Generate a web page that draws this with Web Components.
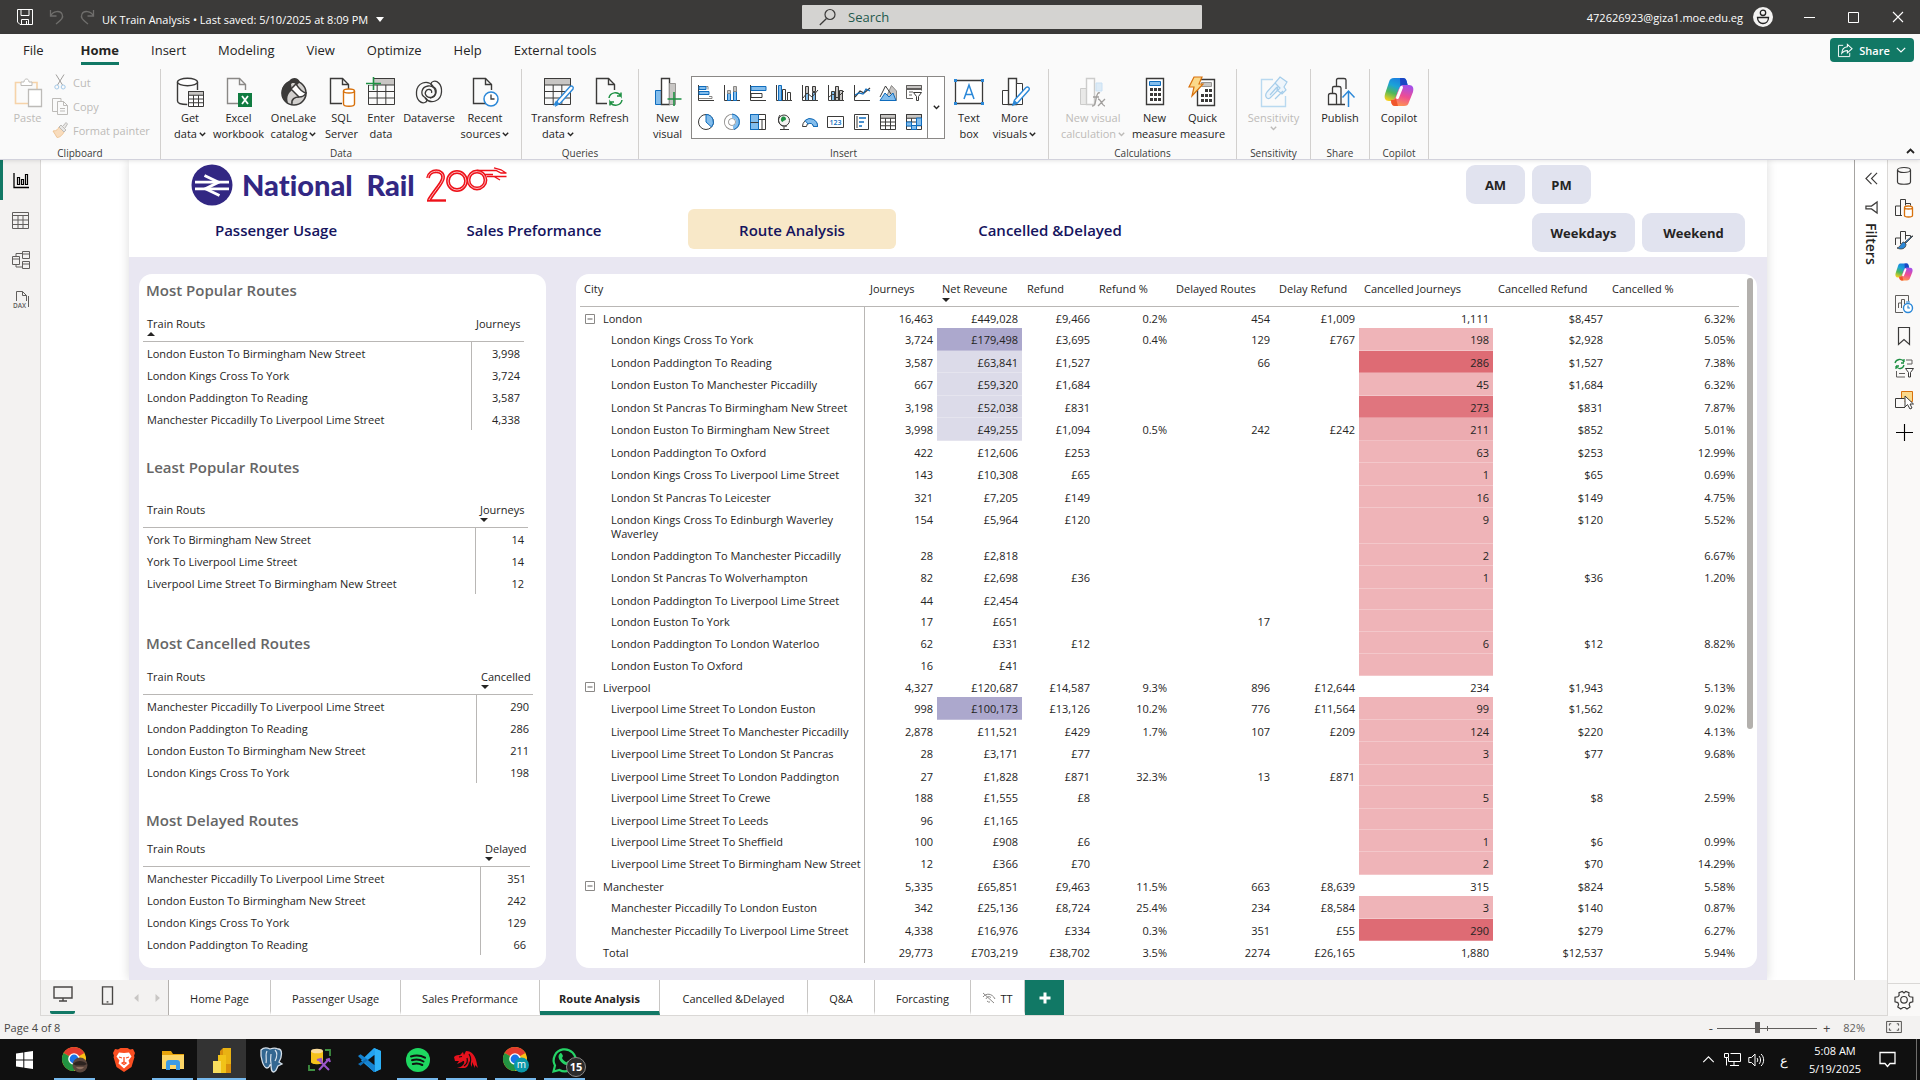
<!DOCTYPE html>
<html lang="en">
<head>
<meta charset="utf-8">
<title>UK Train Analysis</title>
<style>
html,body{margin:0;height:100%}
body{font-family:"Open Sans","Noto Sans",sans-serif;font-size:11px;color:#252423;overflow:hidden;background:#fff}
</style>
</head>
<body>
<desktop-screen></desktop-screen>
<script>
const G='#3b3a39', B='#0f6cbd', LB='#83bdec', GN='#1e9043';
const copilot=(id)=>`<defs><linearGradient id="${id}a" x1="0.6" y1="0" x2="0.2" y2="1"><stop offset="0" stop-color="#1b7de0"/><stop offset=".35" stop-color="#1ba3d8"/><stop offset=".65" stop-color="#4fb85a"/><stop offset="1" stop-color="#f8cf1c"/></linearGradient><linearGradient id="${id}b" x1=".6" y1="0" x2=".3" y2="1"><stop offset="0" stop-color="#a64fe8"/><stop offset=".5" stop-color="#ee4d93"/><stop offset="1" stop-color="#ff9a4d"/></linearGradient></defs>
<path d="M10 1h9c2 0 3 1 3.600 3l1 4h-4c-3 0-4 2-5 5l-3 8c-1 2-2 3-4 3H5c-4 0-5-3-4-7L5 5c1-3 2-4 5-4z" fill="url(#${id}a)"/><path d="M16 1h3c2 0 3 1 3.600 3l1 4h-4c-1.500 0-2.500.5-3.300 1.500z" fill="#1b46c4"/>
<path d="M20 29h-9c-2 0-3-1-3.600-3l-.8-3c3 0 4-1 5-3l3.500-9c1-2 2.500-3 4.500-3H25c4 0 5 3 4 7l-4 10c-1 3-2 4-5 4z" fill="url(#${id}b)"/><path d="M7 23h2c1.500 0 2.300-.6 3-1.500L14 29h-3c-2 0-3-1-3.600-3z" fill="#f0562c"/><path d="M17.500 10.500 13.500 20.500" stroke="#fff" stroke-width="3" stroke-linecap="round"/>`;
const axes=`<path d="M1.500 1v15.500H17" fill="none" stroke="${G}"/>`;
const doc=(c=G)=>`<path d="M17 26.500H2.500v-25h12l6 6V13" fill="none" stroke="${c}" stroke-width="1.400"/><path d="M14.500 1.500v6h6" fill="none" stroke="${c}" stroke-width="1.400"/>`;
const grid=(x,y,w,h,c=G)=>`<g fill="none" stroke="${c}"><path fill="#c8c6c4" d="M${x} ${y}h${w}v${h/4}h-${w}z"/><path d="M${x} ${y}h${w}v${h}h-${w}zM${x} ${y+h/2}h${w}M${x} ${y+h*3/4}h${w}M${x+w/3} ${y+h/4}v${h*3/4}M${x+w*2/3} ${y+h/4}v${h*3/4}"/></g>`;
const cols=(o)=>`<path d="M2.500 13.500h6v14h-6z" fill="${o?'#83bdec':'#fff'}" stroke="${o?B:G}"/><path d="M8.500 1.500h8v26h-8z" fill="#fff" stroke="${G}" stroke-width="1.400"/><path d="M16.500 6.500h6v21h-6z" fill="${o?'#c8c6c4':'#fff'}" stroke="${o?'#979593':G}"/>`;
const chrome=`<circle cx="12" cy="12" r="12" fill="#fbc116"/><path d="M12 12 1.600 6A12 12 0 0 1 22.400 6z" fill="#e33b2e"/><path d="M12 12 1.600 6A12 12 0 0 0 12 24l5-9z" fill="#229342"/><circle cx="12" cy="12" r="5.800" fill="#fff"/><circle cx="12" cy="12" r="4.400" fill="#1a73e8"/>`;
const pencil=`<path d="M13 28l1.500-5L26 10.500c2-1.500 4 .5 3 2.500L17.500 26z" fill="#fff" stroke="#2b88d8" stroke-width="1.400"/><path d="M13 28l1.500-5 3 3z" fill="#2b88d8"/>`;
const ICONS={
 save:[16,16,`<path d="M.5.5h15v15H3l-2.500-2.500z M4 .5v6h8v-6 M4.500 15.500v-5h7v5 M9.500 12v3" fill="none" stroke="#fff"/>`],
 undo:[15,16,`<path d="M1.500 1v6h6M1.500 7C4 2 11 1 13 5s-1 6-6 10" fill="none" stroke="#6f6e6c" stroke-width="1.300"/>`],
 redo:[15,16,`<path d="M13.500 1v6h-6M13.500 7C11 2 4 1 2 5s1 6 6 10" fill="none" stroke="#6f6e6c" stroke-width="1.300"/>`],
 down:[10,6,`<path d="M0 0h10L5 6z" fill="#fff"/>`],
 search:[18,18,`<circle cx="11" cy="6.500" r="5" fill="none" stroke="#3b3a39" stroke-width="1.200"/><path d="M7.500 10.500.8 17" stroke="#3b3a39" stroke-width="1.300"/>`],
 avatar:[20,20,`<circle cx="10" cy="10" r="10" fill="#f3f2f1"/><circle cx="10" cy="5.800" r="2.700" fill="none" stroke="#222" stroke-width="1.300"/><path d="M4.500 10.500h11c0 8-11 8-11 0z" fill="none" stroke="#222" stroke-width="1.300"/>`],
 min:[12,12,`<path d="M0 6.500h11" stroke="#fff"/>`],
 max:[12,12,`<path d="M.5 1.500h10v10H.5z" fill="none" stroke="#fff"/>`],
 close:[12,12,`<path d="M1 1l10 10M11 1 1 11" stroke="#fff" stroke-width="1.100"/>`],
 share:[16,16,`<path d="M5.500 2.500h-5v12h12v-4" fill="none" stroke="#fff"/><path d="M10 1.500 15 6l-5 4.500V8C7 8 5.500 9 4 11c.2-4 2-6.500 6-7z" fill="none" stroke="#fff" stroke-width="1.100"/>`],
 chevw:[10,6,`<path d="M.8.8 5 5 9.200.8" fill="none" stroke="#fff" stroke-width="1.200"/>`],
 chev:[7,5,`<path d="M.8.8 3.500 3.500 6.200.8" fill="none" stroke="currentColor" stroke-width="1.400"/>`],
 up:[9,6,`<path d="M1 5l3.500-3.500L8 5" fill="none" stroke="#252423" stroke-width="1.800"/>`],
 paste:[28,30,`<path d="M14 26.500H1.500v-21h6M17 5.500h6V12" fill="none" stroke="#f6d3a9" stroke-width="1.600"/><path d="M7 8.500h11V5h-3c0-4-5-4-5 0H7z" fill="#fff" stroke="#bdbbb8"/><path d="M14.500 12.500h13v17h-13z" fill="#fff" stroke="#bdbbb8" stroke-width="1.300"/>`],
 cut:[12,16,`<path d="M2 .5 8.500 11M10 .5 3.500 11" fill="none" stroke="#a19f9d"/><circle cx="2.800" cy="13" r="2" fill="none" stroke="#a4c9e8"/><circle cx="9.200" cy="13" r="2" fill="none" stroke="#a4c9e8"/>`],
 copy:[16,17,`<path d="M9 3.500v-3H.5v13H5M5.500 3.500h6l4 4v9h-10z M11.500 3.500v4h4M8 10.500h5M8 13h5" fill="none" stroke="#bdbbb8"/>`],
 painter:[16,16,`<path d="M1 9c4 0 5-2 6-4l5 5c-2 4-5 5.500-7 5.500C4 13 2 11 1 9z" fill="#f8dcbd" stroke="#efc596"/><path d="M7 5l2-2 5 5-2 2zM11 4l3-3.500 1.500 1.500L13 6" fill="#e8e6e4" stroke="#bdbbb8"/>`],
 getdata:[28,30,`<path d="M1.500 5v19c0 2 4 3.500 10 3.500M21.500 5v8" fill="none" stroke="${G}" stroke-width="1.400"/><ellipse cx="11.500" cy="5" rx="10" ry="3.700" fill="#fff" stroke="${G}" stroke-width="1.400"/><path d="M11.500 14h17v16h-17z" fill="#fff"/>${grid(12.5,14.5,15,15)}`],
 excel:[28,30,`${doc('#8a8886')}<path d="M13 16h14v14H13z" fill="#107c41"/><path d="M17 19l6 8M23 19l-6 8" stroke="#fff" stroke-width="1.800"/>`],
 onelake:[28,30,`<circle cx="14" cy="16" r="12" fill="#d2d0ce" stroke="${G}" stroke-width="1.600"/><path d="M9 4C12 0 18 0 20 5l-3 3c-3-3-5-2-6-1l1 6c-3 3-6 6-4 13C0 22-1 9 9 4z" fill="${G}"/><path d="M11 12l8 8c4 0 6-2 7-4-5-1-8-6-10-9z" fill="#fff" stroke="${G}" stroke-width="1.500"/><path d="M12 27c-1-5 3-7 7-7" fill="none" stroke="${G}" stroke-width="1.500"/>`],
 sql:[28,30,`${doc()}<path d="M14 12h14v18H14z" fill="#fafafa"/><path d="M15.500 14v13c0 3 11 3 11 0V14" fill="#fff" stroke="#d8710c" stroke-width="1.400"/><ellipse cx="21" cy="14" rx="5.500" ry="2" fill="#fff" stroke="#d8710c" stroke-width="1.400"/>`],
 enter:[30,30,`${grid(2.500,1.500,26,26)}<path d="M0 0h8v8H0z" fill="#fafafa"/><path d="M7.500 0v13M0 6.500h15" stroke="${GN}" stroke-width="1.600"/>`],
 dataverse:[28,28,`<g fill="none" stroke="${G}" stroke-width="1.300"><path d="M18 8C12 1 2 5 1.500 14 1 22 6 26 10 24.500c3-1 2-4 0-5C5 17 6 9 13 8c5-.6 8 3 7.500 7-.4 4-6 6-9 3-3-3 0-7 3-6.500 2 .3 2.500 2 2 3.500"/><path d="M10 20c6 7 16 3 16.500-6C27 6 22 2 18 3.500c-3 1-2 4 0 5C23 11 22 19 15 20"/></g>`],
 recent:[28,30,`${doc()}<circle cx="20" cy="22" r="7" fill="#fff" stroke="#2b88d8" stroke-width="1.500"/><path d="M20 17.500V22h3.500" fill="none" stroke="${G}" stroke-width="1.300"/>`],
 transform:[32,30,`${grid(2.500,1.500,26,26)}<path d="M14 28.500l1.500-5L28 9.500c2-1.500 4 .5 3 2.500L18.500 26z" fill="#fff" stroke="#2b88d8" stroke-width="1.400"/><path d="M11 29l3-5.500 3.500 3z" fill="#2b88d8"/>`],
 refresh:[30,30,`${doc()}<path d="M13 15h17v15H13z" fill="#fafafa"/><path d="M15 21c1-6 9-7 12-2v-3.500M27 19h-4M28 23c-1 6-9 7-12 2v3.500M16 25h4" fill="none" stroke="${GN}" stroke-width="1.500"/>`],
 newvisual:[30,30,`${cols(1)}<path d="M21 15v14M14.500 22h14" stroke="${GN}" stroke-width="1.600"/>`],
 textbox:[32,30,`<path d="M2.500 3.500h27v23h-27z" fill="#fff" stroke="${G}" stroke-width="1.300"/><g fill="#2b88d8"><path d="M1 2h3v3H1zM28 2h3v3h-3zM1 25h3v3H1zM28 25h3v3h-3z"/></g><path d="M11 22l5-14 5 14M13 17.500h6" fill="none" stroke="#2b88d8" stroke-width="1.500"/>`],
 morevisual:[30,30,`${cols(0)}${pencil}`],
 newcalc:[30,30,`<g opacity=".4"><path d="M2.500 11.500h6v16h-6z" fill="#d2d0ce" stroke="#8a8886"/><path d="M8.500 1.500h8v26h-8z" fill="#fff" stroke="#8a8886" stroke-width="1.400"/><path d="M18 6h6v8h-6z" fill="#b3d6f2" stroke="${LB}"/></g><path d="M14 29c3 0 3-2 4-7s2-7 4-6M15 20h6M20 29l7-7M20 22c3 0 4 7 7 7" fill="none" stroke="#a19f9d" stroke-width="1.300"/>`],
 measure:[22,30,`<path d="M2.500 1.500h17v26h-17z" fill="#fff" stroke="${G}" stroke-width="1.400"/><path d="M5.500 4.500h11v4h-11z" fill="${LB}" stroke="${B}"/><path d="M6 11h3v3H6zM10 11h3v3h-3zM14 11h3v3h-3zM6 16h3v3H6zM10 16h3v3h-3zM14 16h3v3h-3zM6 21h3v3H6zM10 21h3v3h-3zM14 21h3v3h-3z" fill="${G}"/>`],
 quick:[30,32,`<path d="M9.500 3.500h17v26h-17z" fill="#fff" stroke="${G}" stroke-width="1.400"/><path d="M13.500 6.500h10v4h-10z" fill="#c8c6c4" stroke="#979593"/><path d="M17 13h3v3h-3zM21 13h3v3h-3zM13 18h3v3h-3zM17 18h3v3h-3zM21 18h3v3h-3zM13 23h3v3h-3zM17 23h3v3h-3zM21 23h3v3h-3z" fill="${G}"/><path d="M6 1h8l-3 7h4L4 20l2-9H1z" fill="#fbd98a" stroke="#d8710c" stroke-width="1.200"/>`],
 sensitivity:[32,32,`<path d="M15 3.500H3.500v27h24V20" fill="none" stroke="#b9d9f0" stroke-width="1.400"/><path d="M22 1l7 5-3 5 2 3-4 4-5-4 1-4-3-3zM9 16l8-9 5 5-10 10c-3 2-6-2-3-6zM12 19l7-8M17 23l8-8" fill="#eef5fb" stroke="#a5cdea" stroke-width="1.200"/>`],
 publish:[26,30,`<path d="M1.500 27.500v-9c0-1 .5-2 2-2h4c1.500 0 2 1 2 2v9zM5.500 16v-5c0-1 .5-1.500 1.500-1.500h5c1 0 2 .5 2 1.500v16.500h-4.500M9.500 9V3c0-1 .5-1.500 1.500-1.500h6c1 0 2 .5 2 1.500v9M14 27.500h4" fill="none" stroke="${G}" stroke-width="1.300"/><path d="M15.500 20.500 21.500 14l6 6.500M21.500 14v16" fill="none" stroke="#2b88d8" stroke-width="1.500"/>`],
 copilot:[30,30,copilot('c')],
 copilots:[30,30,copilot('s')],
 g1:[18,18,axes+`<path d="M2 2.500h7v3H2zM2 7.500h10v3H2z" fill="${LB}" stroke="${B}"/><path d="M9 2.500h2v3M12 12.500h3v2h-13" fill="none" stroke="#8a8886"/>`],
 g2:[18,18,axes+`<path d="M4.500 9.500h3v7h-3zM10.500 6.500h3v10h-3z" fill="${LB}" stroke="${B}"/><path d="M4.500 6.500h3v3h-3zM10.500 2.500h3v5h-3z" fill="#c8c6c4" stroke="#8a8886"/>`],
 g3:[18,18,axes+`<path d="M2 2.500h15v4H2z" fill="${LB}" stroke="${B}"/><path d="M2 9.500h11v4H2z" fill="#fff" stroke="${G}"/>`],
 g4:[18,18,axes+`<path d="M3.500 1.500h3v15h-3z" fill="${LB}" stroke="${B}"/><path d="M7.500 5.500h3v11h-3zM12.500 8.500h3v8h-3z" fill="#fff" stroke="${G}"/>`],
 g5:[18,18,axes+`<path d="M4.500 2.500h3v8h-3zM11.500 2.500h3v5h-3z" fill="#c8c6c4" stroke="${G}"/><path d="M4.500 9.500h3v7h-3zM11.500 8.500h3v8h-3z" fill="${LB}" stroke="${G}"/><path d="M2 14l4-5 5 4 6-7" fill="none" stroke="${G}"/>`],
 g6:[18,18,axes+`<path d="M4.500 7.500h3v9h-3z" fill="${LB}" stroke="${G}"/><path d="M8.500 2.500h3v14h-3zM12.500 6.500h3v10h-3z" fill="#c8c6c4" stroke="${G}"/><path d="M2 13l4-3 4 4 7-7" fill="none" stroke="${G}"/>`],
 g7:[18,18,axes+`<path d="M2 13l5-6 4 2 6-5" fill="none" stroke="${G}" stroke-width="1.200"/><path d="M2 11l4-2 4 1 3-5 4 2" fill="none" stroke="${B}" stroke-width="1.200"/>`],
 g8:[18,18,`<path d="M6 16 12.500 1.500 17.500 7v9.500z" fill="#c8c6c4" stroke="#8a8886"/><path d="M1 13 6.500 2 12 10" fill="none" stroke="${G}"/><path d="M1 16.500 6 9l4 4 4-4 3 7.500z" fill="${LB}" stroke="${B}"/>`],
 g9:[18,18,`<path d="M8 14.500H1.500v-13h15v5M1.500 5.500h15M4 8h4M4 11h3" fill="none" stroke="#605e5c"/><path d="M1.500 1.500h15v3h-15z" fill="#c8c6c4" stroke="#605e5c"/><path d="M8.500 8.500h8l-3 4v4h-2v-4z" fill="#fff" stroke="${G}"/>`],
 g10:[18,18,`<circle cx="9" cy="9" r="7.500" fill="#fff" stroke="${G}"/><path d="M9 1.500A7.500 7.500 0 0 1 14.500 14L9 9z" fill="${LB}" stroke="${B}"/>`],
 g11:[18,18,`<circle cx="9" cy="9" r="5.500" fill="none" stroke="#8a8886" stroke-width="5"/><circle cx="9" cy="9" r="5.500" fill="none" stroke="#fff" stroke-width="3.400"/><path d="M9 3.500A5.500 5.500 0 0 1 10 14.500" fill="none" stroke="${LB}" stroke-width="4"/><path d="M9 1A8 8 0 0 1 11 16.500" fill="none" stroke="${B}"/>`],
 g12:[18,18,`<path d="M1.500 1.500h15v15h-15z" fill="#fff" stroke="${G}"/><path d="M1.500 1.500h8v15h-8z" fill="${LB}" stroke="${B}"/><path d="M9.500 6.500h7M13 6.500v10M1.500 9.500h8" stroke="${G}"/>`],
 g13:[18,18,`<circle cx="9" cy="7.500" r="5.500" fill="#f3f2f1" stroke="${G}"/><path d="M7 4c2-1 4 0 4 2s-3 1-3 3c-2 0-3-3-1-5z" fill="${GN}"/><path d="M5 2C1 7 5 15 12 13M5 16.500h9M9 14v2" fill="none" stroke="${G}"/>`],
 g14:[18,18,`<path d="M1.500 13.500a7.500 7.500 0 0 1 15 0h-4a3.500 3.500 0 0 0-7 0z" fill="#fff" stroke="${G}"/><path d="M4 7.500A7.500 7.500 0 0 1 16.500 13.500h-4A3.500 3.500 0 0 0 7 11z" fill="${LB}" stroke="${B}"/>`],
 g15:[18,18,`<path d="M.5 3.500h16v11H.5z" fill="#fff" stroke="${G}"/><text x="8.500" y="12" font-size="7" font-weight="600" fill="#0f6cbd" text-anchor="middle" font-family="Open Sans">123</text>`],
 g16:[18,18,`<path d="M1.500 1.500h14v15h-14z" fill="#fff" stroke="${G}"/><path d="M4 3v12" stroke="${G}"/><path d="M6 5h7M6 9h5M6 13h3" stroke="${B}" stroke-width="1.600"/>`],
 g17:[18,18,grid(1.5,1.500,15,15)],
 g18:[18,18,grid(1.5,1.500,15,15)+`<path d="M1.500 9h5v4h-5zM6.500 12.500h5v4h-5zM11.500 5h5v7.500h-5z" fill="${LB}" stroke="${B}"/>`],
 chart:[16,16,`<path d="M1 1v14.500h15" fill="none" stroke="#000" stroke-width="1.300"/><path d="M4.500 5.500h2v7h-2zM8.500 7.500h2v5h-2zM12.500 2.500h2v10h-2z" fill="none" stroke="#000" stroke-width="1.200"/>`],
 table:[17,17,`<path d="M.5.500h16v16H.5zM.5 3.500h16M.5 8h16M.5 12.500h16M6 3.500v13M11 3.500v13" fill="none" stroke="#605e5c"/>`],
 model:[18,18,`<path d="M.5 5.500h7v8h-7zM.5 8h7M10.500.500h7v7h-7zM10.500 3h7M10.500 10.500h7v7h-7zM10.500 13h7M4 5V2.500h6M4 14v2h6" fill="none" stroke="#605e5c"/>`],
 dax:[18,18,`<path d="M4.500 10V.500h6l4 4V10M10.500.500v4h4M16.500 5v11" fill="none" stroke="#605e5c"/><text x="7.500" y="16.500" font-size="6.500" font-weight="600" text-anchor="middle" fill="#605e5c" font-family="Open Sans">DAX</text>`],
 dbl:[14,14,`<path d="M7 1 1 7l6 6M13 1 7 7l6 6" fill="none" stroke="${G}" stroke-width="1.200"/>`],
 funnel:[14,14,`<path d="M13 1v12L7 8.500H1v-3h6z" fill="none" stroke="${G}" stroke-width="1.300"/>`],
 db:[16,20,`<path d="M1.500 4v12c0 3 13 3 13 0V4" fill="none" stroke="${G}" stroke-width="1.200"/><ellipse cx="8" cy="4" rx="6.500" ry="2.500" fill="none" stroke="${G}" stroke-width="1.200"/>`],
 build:[20,20,`<path d="M8 17.500H1.500V8H6M6.500 17.500v-16h5v6M11.500 5.500h5v2" fill="none" stroke="${G}"/><path d="M10.500 9.500v8c0 2 8 2 8 0v-8c0-2-8-2-8 0 0 2 8 2 8 0" fill="#fff" stroke="#d8710c" stroke-width="1.300"/>`],
 brush:[20,20,`<path d="M1.500 15V8H6M6.500 14V1.500h5v8M11.500 5.500h5v2" fill="none" stroke="${G}"/><path d="M19 6l-7 7-1-1 7-6zM10 12c-3 0-3 5-7 6 4 2 9 1 9-4z" fill="#2b88d8" stroke="${G}" stroke-width=".8"/>`],
 perf:[20,20,`<path d="M9 18.500H1.500v-17h13v6M4.500 14v-5h3v5M7.500 14V5.500h3V10" fill="none" stroke="#605e5c"/><circle cx="14" cy="14" r="4.500" fill="#fff" stroke="#2b88d8" stroke-width="1.400"/><path d="M14 11.500V14h2M12 8h4" fill="none" stroke="#2b88d8" stroke-width="1.200"/>`],
 bookmark:[14,20,`<path d="M1.500 1.500h11v17L7 13.500l-5.500 5z" fill="none" stroke="${G}" stroke-width="1.200"/>`],
 sync:[20,20,`<path d="M1 5c1-4 7-5 9-1V1M10 5H7M10 7c-1 4-6 5-8 1v3M2 8h3" fill="none" stroke="${GN}" stroke-width="1.300"/><path d="M12 2h6v4h-5M2.500 13v6H11M5 15.500h6" fill="none" stroke="#605e5c"/><path d="M11.500 10.500h8l-3 4v4.500h-2v-4.500z" fill="#fff" stroke="${G}"/>`],
 select:[20,20,`<path d="M7.500 1.500h11v10h-11z" fill="#fbd98a" stroke="#d8710c"/><path d="M11 17.500H1.500v-9h9" fill="#faf9f8" stroke="${G}"/><path d="M11 6v11l2.500-2.500L16 19l2-1-2-4h3.500z" fill="#fff" stroke="${G}"/>`],
 plus:[18,18,`<path d="M9 0v18M0 9h18" stroke="#000" stroke-width="1.200"/>`],
 gear:[20,20,`<path d="M8.300 1.500 10 3l1.700-1.500 3.300 1.200-.3 2.800 1.300 1.300 2.800.4v4.600l-2.800.8-.8 1.700.8 2.700-3 2L11 17.500H9l-2.200 1.500-3-2 .8-2.700-.8-1.700-2.800-.8V7.200l2.800-.4 1.300-1.300L5 2.700z" fill="none" stroke="${G}" stroke-width="1.200"/><circle cx="10" cy="9.800" r="3.300" fill="none" stroke="${G}" stroke-width="1.200"/>`],
 monitor:[20,16,`<path d="M1 1h18v11H1zM10 12v3M6 15h8" fill="none" stroke="#484644" stroke-width="1.400"/>`],
 phone:[14,22,`<path d="M1.500 1h11v19h-11z" fill="none" stroke="#484644" stroke-width="1.500"/><path d="M6 17.500h2" stroke="#484644" stroke-width="1.500"/>`],
 tl:[6,10,`<path d="M5.500 0v10L0 5z" fill="#c8c6c4"/>`],
 tr:[6,10,`<path d="M.5 0v10L6 5z" fill="#c8c6c4"/>`],
 hidden:[14,12,`<path d="M1 5c3-4 9-4 12 2M1 1l11 10M4 7a3 3 0 0 1 5-1.500M5 9a3 3 0 0 0 3 1" fill="none" stroke="#8a8886"/>`],
 add:[12,12,`<path d="M6 .5v11M.5 6h11" stroke="#fff" stroke-width="3"/>`],
 fit:[17,13,`<path d="M.5.500h16v12H.5z" fill="none" stroke="#484644"/><path d="M3.500 5V3h2M11.500 3h2v2M13.500 8v2h-2M5.500 10h-2V8" fill="none" stroke="#484644"/>`],
 minus:[11,11,`<path d="M.5.500h9v9h-9z" fill="none" stroke="#8a8886"/><path d="M2.500 5h5" stroke="#605e5c"/>`],
 start:[18,18,`<path d="M0 2.500 7.300 1.500v7H0zM8.300 1.300 17 0v8.500H8.300zM0 9.500h7.300v7L0 15.500zM8.300 9.500H17V18l-8.700-1.300z" fill="#fff"/>`],
 chrome1:[25,26,chrome+`<circle cx="18" cy="18" r="7.500" fill="#5a463d"/><path d="M11 17c4-4 10-4 14 0l-3 1.500h-8z" fill="#2c2320"/><path d="M14 20c2 3 6 3 8 0" fill="#8d6f60"/>`],
 brave:[22,24,`<path d="M5 1.500 7.500 0h7L17 1.500l3-.5 2 4-1 3 .5 1-3 10L11 24 3.500 19l-3-10L1 8 0 5l2-4z" fill="#fb4f22"/><path d="M11 5l5-.5 2.500 4-3 4 1 3-5.500 5-5.500-5 1-3-3-4L6 4.500z" fill="#fff"/><path d="M6 9l3 1M16 9l-3 1M11 9v5l-2 1 2 1.500 2-1.500-2-1" fill="none" stroke="#fb4f22" stroke-width="1.300"/>`],
 folder:[24,22,`<path d="M1 2h9l2 3h11v15H1z" fill="#e8a40c"/><path d="M1 6h22v14H1z" fill="#fdd667"/><path d="M5 21v-7c0-2 1-3 3-3h8c2 0 3 1 3 3v7h-4v-5H9v5z" fill="#3b9be6"/>`],
 pbi:[20,26,`<path d="M11 1h8v25H8V4z" fill="#d98f0b"/><path d="M11 1h8v16H11z" fill="#e9b213"/><path d="M6 8h8v18H6z" fill="#f2c318"/><path d="M1 14h8v12H1z" fill="#f8de5e"/>`],
 pg:[26,26,`<path d="M3 3c3-3 7-2 9-1 3-1 6-1 8 0 5 0 4 8 1 13l3 2-4 2c-1 1-1 5-4 6-3 0-3-4-3-8-2 1-1 4-4 4S2 12 3 3z" fill="#336791" stroke="#d6e0ea" stroke-width="1.300"/><path d="M9 4c-2 3 0 8-1 12M17 3c3 3 2 7 0 11M13 16c-1-4 0-7 0-9" fill="none" stroke="#d6e0ea" stroke-width="1.200"/>`],
 ssms:[24,24,`<path d="M3 3v11c0 3 12 3 12 0V3z" fill="#f6c21c"/><ellipse cx="9" cy="3" rx="6" ry="2.300" fill="#fbdc9a"/><path d="M17 2h5v6M1 17v5h6" fill="none" stroke="#3f9142" stroke-width="1.800"/><path d="M11 12l10 10M20 12 11 22M9 12l4-1 1 3M18 12l3-1 1 3" stroke="#9a55c9" stroke-width="2" fill="none"/>`],
 vsc:[24,24,`<path d="M17 0 24 3v18l-7 3L4 12.500 17 0z" fill="#23a3f0"/><path d="M1 8l2.500-1.700L24 21l-7 3z" fill="#1583d1"/><path d="M1 16l2.500 1.800L17 7v10L9 11z" fill="#0f6fb8"/><path d="M17.500 7v10L11 12z" fill="#101010"/><path d="M17 0 24 3v18l-6 3V2z" fill="#2db1f7"/>`],
 spotify:[24,24,`<circle cx="12" cy="12" r="12" fill="#1ed760"/><path d="M5 8.500c5-1.500 10-1 14 1.200M6 12.300c4-1.200 8-.8 11.500 1.200M6.800 16c3.500-.9 6.500-.6 9.500 1" fill="none" stroke="#101010" stroke-width="2" stroke-linecap="round"/>`],
 dragon:[25,18,`<path d="M0 6c2-2 4-2 6-2l3-3 1 3 2-4c6 0 9 5 10 9 1 3 1 6 2 8l-3-3v3l-3-6v5l-3-6c0 3-1 6-4 7H3c5-1 8-4 7-7-2 0-3 2-7 3l2-3-4 0z" fill="#e5121d"/><path d="M15 3c2 3 2 8 0 13M5 6l3-.5M13 7c1 3 0 6-3 8" fill="none" stroke="#101010" stroke-width="1.200"/>`],
 chrome2:[25,26,chrome+`<circle cx="18.500" cy="18" r="7.500" fill="#0a97a8"/><text x="18.500" y="21" font-size="10" fill="#fff" text-anchor="middle" font-family="Open Sans">m</text>`],
 whatsapp:[26,26,`<path d="M1.500 24.500 3 18.500A11 11 0 1 1 7.500 23z" fill="none" stroke="#25d366" stroke-width="2.200"/><path d="M8 6.500c1-1 2 0 3 2.500l-1 2c1 2 2.500 3.500 4.500 4.200l1.500-1.500 3 1.500c0 3-3 3.500-5 2.800C10 17 7 13 6.500 10c0-1.500.5-2.500 1.500-3.500z" fill="#25d366"/>`],
 tchev:[14,8,`<path d="M1 7l6-6 6 6" fill="none" stroke="#fff" stroke-width="1.300"/>`],
 net:[17,15,`<path d="M6.500 1.500h10v8h-12V6M10 9.500v4M6 13.500h9M.5 1.500h4v4h-4zM2.500 5.500v8" fill="none" stroke="#fff"/>`],
 sound:[17,14,`<path d="M.8 4.500h2.700L7 1v12L3.500 9.500H.8zM9 5c1 1 1 3 0 4M11 3c2 2 2 6 0 8M13 1c3.500 3 3.500 9 0 12" fill="none" stroke="#fff"/>`],
 notif:[18,18,`<path d="M1 1.500h15v11h-5l-2.500 3-2.500-3H1z" fill="none" stroke="#fff" stroke-width="1.300"/>`],
 nrlogo:[42,42,`<circle cx="21" cy="21" r="20.500" fill="#322783"/><path d="M4 18.200h34M4 24.800h34" stroke="#fff" stroke-width="2.800"/><path d="M13.500 11.500 27.500 18.200 14.500 24.800 28.500 31.500" fill="none" stroke="#fff" stroke-width="2.900"/>`],
 two:[82,36,`<g fill="none" stroke="#ee1119"><path stroke-width="3.800" d="M3 11C4 2 19 2 18 11c-.5 5-8 12-14 22"/><path stroke-width="2.400" d="M2 33.500h19"/><circle cx="32" cy="14" r="9" stroke-width="3.800"/><circle cx="52" cy="13" r="8.500" stroke-width="3.800"/></g><g fill="none" stroke="#fff" stroke-width=".7"><path d="M3 11C4 2 19 2 18 11c-.5 5-8 12-14 22"/><circle cx="32" cy="14" r="9"/><circle cx="52" cy="13" r="8.500"/></g><path d="M52 3.500h19l5 2.500h5.500M69 .8l7 2 5 3.200M60 7.500h8M62 9.500h19.500M69 9.500l6 3.500" fill="none" stroke="#ee1119" stroke-width="1.300"/>`]
};
const el=(name,css,html)=>customElements.define(name,class extends HTMLElement{
  connectedCallback(){
    if(this.shadowRoot)return;
    const t=document.createElement('template');
    t.innerHTML=`<style>*{box-sizing:border-box}button{font:inherit;color:inherit;border:0;background:none;padding:0;margin:0}:host{display:block}${css}</style>${typeof html==='function'?html(this):html}`;
    this.attachShadow({mode:'open'}).append(t.content.cloneNode(true));
  }
});
const ic=(n,s='')=>`<ui-icon name="${n}" ${s}></ui-icon>`;

el('ui-icon',`:host{display:inline-flex;flex:none}svg{display:block;overflow:visible}`,h=>{
  const [w,ht,b]=ICONS[h.getAttribute('name')];const s=+h.getAttribute('size')||w;
  return `<svg width="${s}" height="${Math.round(ht*s/w)}" viewBox="0 0 ${w} ${ht}" aria-hidden="true">${b}</svg>`;});

el('title-bar',`:host{display:grid;grid-template-columns:802fr 400px 718fr;align-items:center;height:34px;background:#3b3a39;color:#fff}
.l{display:flex;align-items:center;padding-left:17px;gap:16px}.l button{display:flex}
.l .doc{display:flex;align-items:center;gap:8px;margin-left:-9px;padding-top:4px}
label{display:flex;align-items:center;gap:11px;height:24px;background:#d4d3d1;padding-left:17px;border-radius:1px}
input{border:0;background:none;outline:0;flex:1;min-width:0;font:13px "Open Sans",sans-serif;padding:0}input::placeholder{color:#1f5a4d;opacity:1}
.r{display:flex;justify-content:flex-end;align-items:center}.mail{margin-right:10px}.w{width:44px;display:flex;justify-content:center}.win{display:flex;margin-left:15px}`,
`<div class="l"><button aria-label="Save">${ic('save')}</button><button aria-label="Undo">${ic('undo')}</button><button aria-label="Redo">${ic('redo')}</button><button class="doc" aria-label="File info"><span>UK Train Analysis • Last saved: 5/10/2025 at 8:09 PM</span>${ic('down','size="8"')}</button></div>
<label aria-label="Search">${ic('search')}<input type="search" placeholder="Search"></label>
<div class="r"><span class="mail">472626923@giza1.moe.edu.eg</span>${ic('avatar')}<div class="win"><button class="w" aria-label="Minimize">${ic('min')}</button><button class="w" aria-label="Maximize">${ic('max')}</button><button class="w" aria-label="Close">${ic('close')}</button></div></div>`);

el('ribbon-button',`:host{width:var(--w)}button{display:flex;flex-direction:column;align-items:center;width:100%}
.i{height:32px;display:flex;align-items:center;margin-bottom:2px}span{line-height:16px;white-space:nowrap;display:flex;align-items:center;gap:2px}
:host([off]) button{color:#bdbbb8}`,
h=>`<button ${h.hasAttribute('off')?'disabled':''}><div class="i">${ic(h.getAttribute('icon'))}</div>${h.getAttribute('label').split('|').map(s=>`<span>${s.replace('^','')}${s.includes('^')?ic('chev'):''}</span>`).join('')}</button>`);

el('ribbon-group',`:host{display:flex;flex-direction:column;border-right:1px solid #d2d0ce;width:var(--w);height:90px}
.b{display:flex;flex:1;min-height:0;padding:7px 0 0 var(--p,4px)}.n{line-height:12px;font-size:10px;text-align:center;color:#3b3a39}`,
h=>`<div class="b"><slot></slot></div><div class="n">${h.getAttribute('label')}</div>`);

el('clip-actions',`:host{display:flex;flex-direction:column;margin-top:-6px}button{display:flex;align-items:center;gap:5px;height:24px;color:#bdbbb8;white-space:nowrap}ui-icon{width:17px;justify-content:center}`,
`<button disabled>${ic('cut')}Cut</button><button disabled>${ic('copy')}Copy</button><button disabled>${ic('painter')}Format painter</button>`);

el('visual-gallery',`:host{display:flex;width:254px;height:63px;border:1px solid #8a8886;background:#fff}
.g{display:grid;grid-template-columns:repeat(9,26px);grid-auto-rows:29px;padding:1px 0 0 1px;flex:1}.g button{display:flex;align-items:center;justify-content:center}
.m{width:17px;border-left:1px solid #8a8886;display:flex;align-items:center;justify-content:center}`,
`<div class="g">${Array.from({length:18},(_,i)=>`<button aria-label="Visual ${i+1}">${ic('g'+(i+1))}</button>`).join('')}</div><button class="m" aria-label="More">${ic('chev')}</button>`);

const rb=(w,icon,label,off='')=>`<ribbon-button style="--w:${w}px" icon="${icon}" label="${label}" ${off}></ribbon-button>`;
el('app-ribbon',`:host{display:flex;flex-direction:column;height:126px;background:#fafafa;position:relative;z-index:2;border-bottom:1px solid #d2d2dc;box-shadow:0 1px 4px #0000001c}
nav{display:flex;height:35px;padding:3px 6px 0 23px;align-items:flex-start;gap:32px}
nav button.t{font-size:13px;line-height:26px;height:28px;border-bottom:3px solid transparent}nav .f{margin-right:5px}nav .on{font-weight:700;border-color:#117865!important}
.share{margin:1px 0 0 auto;background:#117865;color:#fff;height:24px;width:84px;border-radius:4px;display:flex;align-items:center;justify-content:center;gap:6px;font-weight:600;font-size:11px}
.g{display:flex;align-items:flex-start}.up{margin-left:auto;align-self:flex-end;padding:0 5px 5px 0;display:flex}`,
`<nav><button class="t f">File</button><button class="t on">Home</button><button class="t">Insert</button><button class="t">Modeling</button><button class="t">View</button><button class="t">Optimize</button><button class="t">Help</button><button class="t">External tools</button><button class="share">${ic('share','size="15"')}Share${ic('chevw')}</button></nav>
<div class="g">
<ribbon-group label="Clipboard" style="--w:161px;--p:4px">${rb(47,'paste','Paste','off')}<clip-actions></clip-actions></ribbon-group>
<ribbon-group label="Data" style="--w:361px">${rb(50,'getdata','Get|data^')}${rb(47,'excel','Excel|workbook')}${rb(63,'onelake','OneLake|catalog^')}${rb(33,'sql','SQL|Server')}${rb(46,'enter','Enter|data')}${rb(50,'dataverse','Dataverse')}${rb(62,'recent','Recent|sources^')}</ribbon-group>
<ribbon-group label="Queries" style="--w:117px">${rb(64,'transform','Transform|data^')}${rb(38,'refresh','Refresh')}</ribbon-group>
<ribbon-group label="Insert" style="--w:410px;--p:5px">${rb(47,'newvisual','New|visual')}<visual-gallery></visual-gallery>${rb(48,'textbox','Text|box')}${rb(43,'morevisual','More|visuals^')}</ribbon-group>
<ribbon-group label="Calculations" style="--w:188px">${rb(80,'newcalc','New visual|calculation^','off')}${rb(43,'measure','New|measure')}${rb(53,'quick','Quick|measure')}</ribbon-group>
<ribbon-group label="Sensitivity" style="--w:74px;--p:0px">${rb(74,'sensitivity','Sensitivity|^','off')}</ribbon-group>
<ribbon-group label="Share" style="--w:59px;--p:0px">${rb(59,'publish','Publish')}</ribbon-group>
<ribbon-group label="Copilot" style="--w:59px;--p:0px">${rb(59,'copilot','Copilot')}</ribbon-group>
<button class="up" aria-label="Collapse ribbon">${ic('up')}</button></div>`);

el('view-rail',`:host{display:flex;flex-direction:column;width:41px;background:#f3f2f1;border-right:1px solid #dad8d6}
button{height:40px;display:flex;align-items:center;justify-content:center;border-left:3px solid transparent;padding-right:2px}.on{border-color:#117865}`,
['chart','table','model','dax'].map((n,i)=>`<button class="${i?'':'on'}" aria-label="${n} view">${ic(n)}</button>`).join(''));

el('pane-rail',`:host{display:flex;flex-direction:column;width:33px;background:#faf9f8;border-left:1px solid #dad8d6}
button{height:32px;display:flex;align-items:center;justify-content:center}.s{margin-top:auto;border-top:1px solid #dad8d6;height:33px}`,
['db','build','brush','copilots','perf','bookmark','sync','select','plus'].map(n=>`<button aria-label="${n}">${ic(n,n==='copilots'?'size="18"':n==='plus'?'size="17"':'')}</button>`).join('')+`<button class="s" aria-label="Settings">${ic('gear')}</button>`);

el('filters-pane',`:host{display:flex;flex-direction:column;align-items:center;width:33px;border-left:1px solid #a6a4a2;background:#fff;padding-top:12px;gap:16px}
button{display:flex}h2{margin:-7px 0 0;writing-mode:vertical-rl;font-size:14px;font-weight:600;line-height:20px}`,
`<button aria-label="Expand">${ic('dbl','size="13"')}</button>${ic('funnel','size="13"')}<h2>Filters</h2>`);

el('nav-tab',`button{width:208px;height:40px;border-radius:6px;font-size:15px;font-weight:600;color:#15145e;padding-top:1px}:host([on]) button{background:#f8e8c8}`,`<button><slot></slot></button>`);
el('slicer-button',`button{width:var(--w);height:39px;border-radius:9px;background:#e1e3ef;font-size:13px;font-weight:700;color:#252423}`,`<button><slot></slot></button>`);

el('report-header',`:host{display:flex;justify-content:space-between;height:97px;background:#fff;padding:0 22px 0 43px}
.brand{display:flex;align-items:center;height:49px;padding-left:19px}.brand b{font:900 29px/40px Lato,sans-serif;font-variant-ligatures:none;color:#322783;margin:0 10px 0 9px;white-space:pre}
.nav{display:flex;gap:50px}.s{display:flex;flex-direction:column;gap:9px;padding-top:5px}.a{display:flex;gap:7px}.a+.a{padding-left:66px}`,
`<div><div class="brand">${ic('nrlogo')}<b>National  Rail</b>${ic('two')}</div><div class="nav"><nav-tab>Passenger Usage</nav-tab><nav-tab>Sales Preformance</nav-tab><nav-tab on>Route Analysis</nav-tab><nav-tab>Cancelled &amp;Delayed</nav-tab></div></div>
<div class="s"><div class="a"><slicer-button style="--w:59px">AM</slicer-button><slicer-button style="--w:59px">PM</slicer-button></div><div class="a"><slicer-button style="--w:103px">Weekdays</slicer-button><slicer-button style="--w:103px">Weekend</slicer-button></div></div>`);

const L={
 pop:[['London Euston To Birmingham New Street','3,998'],['London Kings Cross To York','3,724'],['London Paddington To Reading','3,587'],['Manchester Piccadilly To Liverpool Lime Street','4,338']],
 least:[['York To Birmingham New Street','14'],['York To Liverpool Lime Street','14'],['Liverpool Lime Street To Birmingham New Street','12']],
 canc:[['Manchester Piccadilly To Liverpool Lime Street','290'],['London Paddington To Reading','286'],['London Euston To Birmingham New Street','211'],['London Kings Cross To York','198']],
 del:[['Manchester Piccadilly To Liverpool Lime Street','351'],['London Euston To Birmingham New Street','242'],['London Kings Cross To York','129'],['London Paddington To Reading','66']]};
el('route-list',`:host{height:var(--h)}h2{margin:0;padding-left:3px;font-size:15px;line-height:22px;font-weight:600;color:#666}
table{margin-top:var(--gap);border-collapse:separate;border-spacing:0;table-layout:fixed}
th{font-weight:400;text-align:left;vertical-align:top;height:26px;line-height:16px;padding:0 0 0 4px;border-bottom:1px solid #b9b7b5}th+th{padding-left:5px}
td{height:22px;line-height:16px;padding:4px 4px 2px 4px}td+td{text-align:right;border-left:1px solid #b9b7b5}td:first-child{white-space:nowrap}
i{display:block;width:0;border:4px solid transparent;border-top:4px solid #252423;border-bottom:0;margin:0}.u i{border-top:0;border-bottom:4px solid #252423}`,
h=>{const a=n=>h.getAttribute(n),up=a('sort')==='up';return `<h2>${a('heading')}</h2><table><colgroup><col style="width:${a('c1')}px"><col style="width:${a('c2')}px"></colgroup><thead><tr><th class="u" scope="col">Train Routs${up?'<i></i>':''}</th><th scope="col">${a('col')}${up?'':'<i></i>'}</th></tr></thead><tbody>${L[a('data')].map(r=>`<tr><td>${r[0]}</td><td>${r[1]}</td></tr>`).join('')}</tbody></table>`;});

const P='#efb4b8';
const M=`*London;16,463;£449,028;£9,466;0.2%;454;£1,009;1,111;$8,457;6.32%
London Kings Cross To York;3,724;£179,498;£3,695;0.4%;129;£767;198;$2,928;5.05%
London Paddington To Reading;3,587;£63,841;£1,527;;66;;286;$1,527;7.38%
London Euston To Manchester Piccadilly;667;£59,320;£1,684;;;;45;$1,684;6.32%
London St Pancras To Birmingham New Street;3,198;£52,038;£831;;;;273;$831;7.87%
London Euston To Birmingham New Street;3,998;£49,255;£1,094;0.5%;242;£242;211;$852;5.01%
London Paddington To Oxford;422;£12,606;£253;;;;63;$253;12.99%
London Kings Cross To Liverpool Lime Street;143;£10,308;£65;;;;1;$65;0.69%
London St Pancras To Leicester;321;£7,205;£149;;;;16;$149;4.75%
London Kings Cross To Edinburgh Waverley Waverley;154;£5,964;£120;;;;9;$120;5.52%
London Paddington To Manchester Piccadilly;28;£2,818;;;;;2;;6.67%
London St Pancras To Wolverhampton;82;£2,698;£36;;;;1;$36;1.20%
London Paddington To Liverpool Lime Street;44;£2,454;;;;;;;
London Euston To York;17;£651;;;17;;;;
London Paddington To London Waterloo;62;£331;£12;;;;6;$12;8.82%
London Euston To Oxford;16;£41;;;;;;;
*Liverpool;4,327;£120,687;£14,587;9.3%;896;£12,644;234;$1,943;5.13%
Liverpool Lime Street To London Euston;998;£100,173;£13,126;10.2%;776;£11,564;99;$1,562;9.02%
Liverpool Lime Street To Manchester Piccadilly;2,878;£11,521;£429;1.7%;107;£209;124;$220;4.13%
Liverpool Lime Street To London St Pancras;28;£3,171;£77;;;;3;$77;9.68%
Liverpool Lime Street To London Paddington;27;£1,828;£871;32.3%;13;£871;;;
Liverpool Lime Street To Crewe;188;£1,555;£8;;;;5;$8;2.59%
Liverpool Lime Street To Leeds;96;£1,165;;;;;;;
Liverpool Lime Street To Sheffield;100;£908;£6;;;;1;$6;0.99%
Liverpool Lime Street To Birmingham New Street;12;£366;£70;;;;2;$70;14.29%
*Manchester;5,335;£65,851;£9,463;11.5%;663;£8,639;315;$824;5.58%
Manchester Piccadilly To London Euston;342;£25,136;£8,724;25.4%;234;£8,584;3;$140;0.87%
Manchester Piccadilly To Liverpool Lime Street;4,338;£16,976;£334;0.3%;351;£55;290;$279;6.27%
=Total;29,773;£703,219;£38,702;3.5%;2274;£26,165;1,880;$12,537;5.94%`.split('\n').map(r=>r.split(';'));
const fill=(r,i)=>{if(/^[*=]/.test(r[0]))return '';let c='';
 if(i===2)c={'£179,498':'#aca8cd','£100,173':'#aca8cd','£63,841':'#dcdbe9','£59,320':'#dcdbe9','£52,038':'#dcdbe9','£49,255':'#dcdbe9'}[r[2]]||'';
 if(i===7)c={'286':'#de6b74','290':'#de6b74','273':'#e0757e','211':'#ecabb0'}[r[7]]||P;
 return c?`background:${c};border-bottom:1px solid #ffffff40`:'';};
el('route-matrix',`:host{display:flex;justify-content:space-between;background:#fff;border-radius:13px;padding:4px 4px 0}
table{border-collapse:separate;border-spacing:0;table-layout:fixed;height:685px;width:1159px}
th{font-weight:400;text-align:left;vertical-align:top;line-height:16px;padding:3px 0 0 5px;border-bottom:1px solid #b9b7b5;white-space:nowrap}th:first-child{padding-left:4px}thead tr{height:29px}
i{display:block;width:0;border:4px solid transparent;border-top:4px solid #252423;border-bottom:0;margin:1px 0 0 0}
td{text-align:right;vertical-align:top;line-height:14px;padding:5px 4px 2px}td:first-child{text-align:left;border-right:1px solid #b9b7b5;padding-left:31px;padding-right:0}td.c:first-child{padding-left:5px}
.x{display:flex;align-items:center;gap:7px}.x button{display:flex}.t{padding-left:18px}
.bar{width:6px;height:451px;border-radius:3px;background:#b3b0ad}`,
()=>{const W=[285,72,85,72,77,103,85,134,114,132],H=['City','Journeys','Net Reveune','Refund','Refund %','Delayed Routes','Delay Refund','Cancelled Journeys','Cancelled Refund','Cancelled %'];
return `<table><colgroup>${W.map(w=>`<col style="width:${w}px">`).join('')}</colgroup><thead><tr>${H.map((h,i)=>`<th scope="col">${h}${i===2?'<i></i>':''}</th>`).join('')}</tr></thead><tbody>${M.map(r=>`<tr>${r.map((v,i)=>{if(i)return `<td style="${fill(r,i)}">${v}</td>`;
 const n=v.replace(/^[*=]/,'');return v[0]==='*'?`<td class="c"><div class="x"><button aria-label="Collapse ${n}">${ic('minus')}</button>${n}</div></td>`:v[0]==='='?`<td class="c"><div class="t">${n}</div></td>`:`<td>${n}</td>`;}).join('')}</tr>`).join('')}</tbody></table><div class="bar"></div>`;});

el('report-page',`:host{display:flex;flex-direction:column;flex:1;background:#e9e7f2;box-shadow:0 0 10px #00000026}
main{flex:1;display:flex;gap:30px;padding:17px 10px 12px}.l{width:407px;flex:none;background:#fff;border-radius:13px;padding:5px 4px}route-matrix{flex:1}`,
`<report-header></report-header><main><section class="l">
<route-list heading="Most Popular Routes" data="pop" col="Journeys" sort="up" c1="328" c2="53" style="--h:177px;--gap:15px"></route-list>
<route-list heading="Least Popular Routes" data="least" col="Journeys" c1="332" c2="53" style="--h:176px;--gap:24px"></route-list>
<route-list heading="Most Cancelled Routes" data="canc" col="Cancelled" c1="333" c2="57" style="--h:177px;--gap:15px"></route-list>
<route-list heading="Most Delayed Routes" data="del" col="Delayed" c1="337" c2="50" style="--h:150px;--gap:10px"></route-list></section><route-matrix></route-matrix></main>`);

el('page-tabs',`:host{display:flex;height:36px;background:#f3f2f1;border-bottom:1px solid #dad8d6}
.v{display:flex;align-items:center;width:128px;border-right:1px solid #b3b0ad;padding-left:9px}.v button{display:flex;justify-content:center;align-items:center}.v .d{width:25px;height:33px;border-bottom:3px solid #117865;border-radius:2px;padding-bottom:4px}.v .m{width:24px;margin:0 7px 4px 20px}.v .p{width:21px}
.t{width:var(--w);background:#fff;border-right:1px solid #c8c6c4;display:flex;align-items:center;justify-content:center;gap:4px;padding-top:5px;border-bottom:4px solid transparent}.on{font-weight:700;border-bottom-color:#117865}
.add{width:39px;background:#117865;display:flex;align-items:center;justify-content:center}`,
`<div class="v"><button class="d" aria-label="Desktop layout">${ic('monitor')}</button><button class="m" aria-label="Mobile layout">${ic('phone','size="13"')}</button><button class="p" aria-label="Previous">${ic('tl','size="5"')}</button><button class="p" aria-label="Next">${ic('tr','size="5"')}</button></div>
${[['Home Page',102],['Passenger Usage',130],['Sales Preformance',139],['Route Analysis',120,'on'],['Cancelled &amp;Delayed',148],['Q&amp;A',67],['Forcasting',96]].map(t=>`<button class="t ${t[2]||''}" style="--w:${t[1]}px">${t[0]}</button>`).join('')}<button class="t" style="--w:54px">${ic('hidden')}TT</button><button class="add" aria-label="New page">${ic('add')}</button>`);

el('status-bar',`:host{display:flex;align-items:center;justify-content:space-between;height:23px;background:#f3f2f1;color:#484644;padding:0 18px 0 4px}
.z{display:flex;align-items:center}.z button{font-size:13px;line-height:16px}input{appearance:none;width:100px;height:12px;margin:0 6px 0 4px;background:linear-gradient(#605e5c,#605e5c) 0 6px/100% 1px no-repeat,linear-gradient(#605e5c,#605e5c) 50px 4px/1px 5px no-repeat}
input::-webkit-slider-thumb{appearance:none;width:5px;height:11px;background:#605e5c}.p{margin:0 21px 0 13px;color:#605e5c}`,
`<span>Page 4 of 8</span><div class="z"><button aria-label="Zoom out">-</button><input type="range" min="10" max="190" value="82" aria-label="Zoom"><button aria-label="Zoom in">+</button><span class="p">82%</span><button aria-label="Fit to page">${ic('fit','size="16"')}</button></div>`);

el('task-bar',`:host{display:flex;justify-content:space-between;height:41px;background:#101010;color:#fff}
.a,.r{display:flex}.a button{width:49px;display:flex;align-items:center;justify-content:center;position:relative}.a button:first-child{width:50px}
.run::after{content:"";position:absolute;left:4px;right:4px;bottom:0;height:2px;background:#76b9ed}.act{background:#333}.act::after{left:0;right:0}
.bd{position:absolute;left:26px;top:18px;width:20px;height:20px;border-radius:10px;border:1px solid #8a8886;background:#2b2b2b;font:700 11px/18px "Open Sans",sans-serif}
.r{align-items:center}.r>*{flex:none}.ar{width:38px;text-align:center;font-size:13px}.tm{width:64px;text-align:center;line-height:18px;margin-right:12px}.n{display:flex;margin-right:19px}.e{width:1px;height:41px;background:#6f6e6c;margin-right:3px}.q{margin-right:7px}.q:first-child{margin-right:9px}`,
`<div class="a">${[['start',''],['chrome1','run'],['brave',''],['folder','run'],['pbi','run act'],['pg',''],['ssms',''],['vsc',''],['spotify','run'],['dragon','run'],['chrome2','run'],['whatsapp','run']].map(x=>`<button class="${x[1]}" aria-label="${x[0]}">${ic(x[0])}${x[0]==='whatsapp'?'<span class="bd">15</span>':''}</button>`).join('')}</div>
<div class="r">${ic('tchev','class="q" size="13"')}${ic('net','class="q"')}${ic('sound')}<span class="ar">ع</span><div class="tm">5:08 AM<br>5/19/2025</div><button class="n" aria-label="Notifications">${ic('notif')}</button><div class="e"></div></div>`);

el('desktop-screen',`:host{display:flex;flex-direction:column;height:100vh}.w{flex:1;display:flex;min-height:0}.mid{flex:1;display:flex;flex-direction:column;min-width:0}
.c{flex:1;display:flex;min-height:0}.cv{flex:1;display:flex;padding:0 87px 0 88px;overflow:hidden}`,
`<title-bar></title-bar><app-ribbon></app-ribbon><div class="w"><view-rail></view-rail><div class="mid"><div class="c"><div class="cv"><report-page></report-page></div><filters-pane></filters-pane></div><page-tabs></page-tabs></div><pane-rail></pane-rail></div><status-bar></status-bar><task-bar></task-bar>`);
</script>
</body>
</html>
